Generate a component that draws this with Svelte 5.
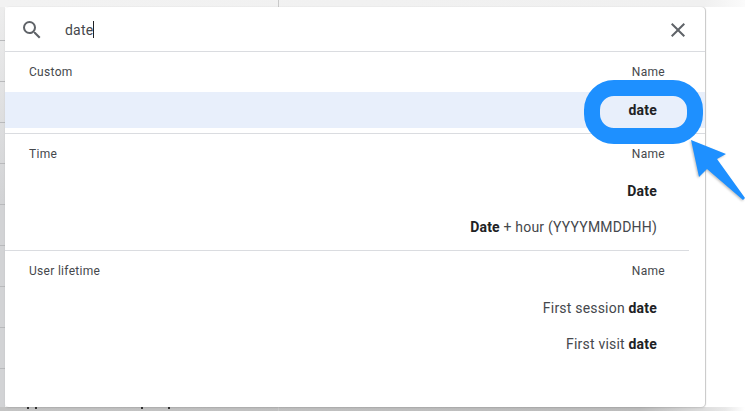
<script>
  const sections = [
    { label: 'Custom', rows: [{ parts: [{ b: true, t: 'date' }], active: true }] },
    { label: 'Time', rows: [
      { parts: [{ b: true, t: 'Date' }] },
      { parts: [{ b: true, t: 'Date' }, { t: ' + hour (YYYYMMDDHH)' }] }
    ] },
    { label: 'User lifetime', rows: [
      { parts: [{ t: 'First session ' }, { b: true, t: 'date' }] },
      { parts: [{ t: 'First visit ' }, { b: true, t: 'date' }] }
    ] }
  ];
</script>

<div class="page">
  <div class="backdrop-line"></div>
  <div class="panel">
    <div class="search">
      <svg class="icon" viewBox="0 0 24 24" width="24" height="24"><path fill="#5f6368" d="M15.5 14h-.79l-.28-.27A6.47 6.47 0 0 0 16 9.5 6.5 6.5 0 1 0 9.5 16c1.61 0 3.09-.59 4.23-1.57l.27.28v.79l5 4.99L20.49 19l-4.99-5zm-6 0C7.01 14 5 11.99 5 9.5S7.01 5 9.5 5 14 7.01 14 9.5 11.99 14 9.5 14z"/></svg>
      <span class="query">date</span><span class="caret"></span>
      <svg class="close" viewBox="0 0 24 24" width="24" height="24"><path fill="#5f6368" d="M19 6.41 17.59 5 12 10.59 6.41 5 5 6.41 10.59 12 5 17.59 6.41 19 12 13.41 17.59 19 19 17.59 13.41 12z"/></svg>
    </div>
    {#each sections as s, i}
      <section class="sec sec{i}">
        <div class="head"><span>{s.label}</span><span>Name</span></div>
        {#each s.rows as r}
          <div class="row" class:active={r.active}>
            <span>{#each r.parts as p}{#if p.b}<b>{p.t}</b>{:else}{p.t}{/if}{/each}</span>
          </div>
        {/each}
      </section>
    {/each}
  </div>
  <div class="ring"></div>
  <svg class="arrow" viewBox="0 0 745 411" width="745" height="411">
    <polygon points="691,140 726,154 717,159 745,198 743,200 707,169 699,177" fill="#1e90ff"/>
  </svg>
</div>

<style>
  :global(body) { margin: 0; background: #fff; }
  .page {
    position: relative;
    width: 745px;
    height: 411px;
    overflow: hidden;
    padding: 7px 0 0 5px;
    box-sizing: border-box;
    font-family: Roboto, "Liberation Sans", sans-serif;
    color: #45484c;
    background:
      linear-gradient(#333, #333) 27px 407px / 2px 2px no-repeat,
      linear-gradient(#333, #333) 35px 407px / 2px 2px no-repeat,
      linear-gradient(#333, #333) 141px 407px / 2px 2px no-repeat,
      linear-gradient(#333, #333) 168px 407px / 2px 2px no-repeat,
      linear-gradient(to right, #f2f2f2 0, #f0f0f0 705px, #fbfbfb 745px) 0 0 / 100% 7px no-repeat,
      linear-gradient(to right, #c4c4c4 0, #bcbcbc 640px, #e8e8e8 725px, #fff 745px) 0 407px / 100% 4px no-repeat,
      repeating-linear-gradient(to bottom, transparent 0, transparent 40px, #b9babc 40px, #b9babc 41px) 0 0 / 5px 100% no-repeat,
      linear-gradient(to bottom, #eeeeee 0, #d2d3d5 200px, #d2d3d5 100%) 0 0 / 5px 100% no-repeat,
      #fff;
  }
  .backdrop-line {
    position: absolute;
    left: 278px;
    top: 0;
    width: 1px;
    height: 411px;
    background: #c9c9c9;
  }
  .panel {
    position: relative;
    width: 700px;
    height: 400px;
    box-sizing: border-box;
    background: #fff;
    border-radius: 4px;
    box-shadow: 1px 0 1px rgba(0,0,0,.2), 0 1px 2px rgba(0,0,0,.1);
  }
  .search {
    display: flex;
    align-items: center;
    height: 44px;
    border-bottom: 1px solid #dadce0;
    padding: 1px 15px 0 15px;
    box-sizing: content-box;
    height: 43px;
    font-size: 14px;
  }
  .icon { flex: none; }
  .query { margin-left: 21px; letter-spacing: .2px; }
  .caret { width: 1px; height: 17px; background: #202124; }
  .close { margin-left: auto; }
  .sec { display: flex; flex-direction: column; }
  .sec0 { height: 81px; border-bottom: 1px solid #dadce0; box-sizing: content-box; }
  .sec1 { height: 116px; border-bottom: 1px solid #dadce0; width: 684px; }
  .head {
    display: flex;
    justify-content: space-between;
    align-items: center;
    box-sizing: border-box;
    height: 39px;
    padding: 1px 40px 0 24px;
    font-size: 12px;
    letter-spacing: .3px;
  }
  .sec0 .head { height: 40px; padding-top: 0; }
  .sec1 .head { padding-right: 24px; }
  .row {
    display: flex;
    justify-content: flex-end;
    align-items: center;
    height: 36px;
    padding-right: 48px;
    font-size: 14px;
    letter-spacing: .2px;
  }
  .sec1 .row { padding-right: 32px; }
  .row.active { background: #e8effb; }
  b { font-weight: 700; color: #202124; }
  .ring {
    position: absolute;
    left: 584px;
    top: 80px;
    width: 87px;
    height: 32px;
    border: 16px solid #1e90ff;
    border-radius: 30px;
  }
  .arrow { position: absolute; left: 0; top: 0; filter: drop-shadow(-1px 1px 1px rgba(0,0,0,.25)); }
</style>
